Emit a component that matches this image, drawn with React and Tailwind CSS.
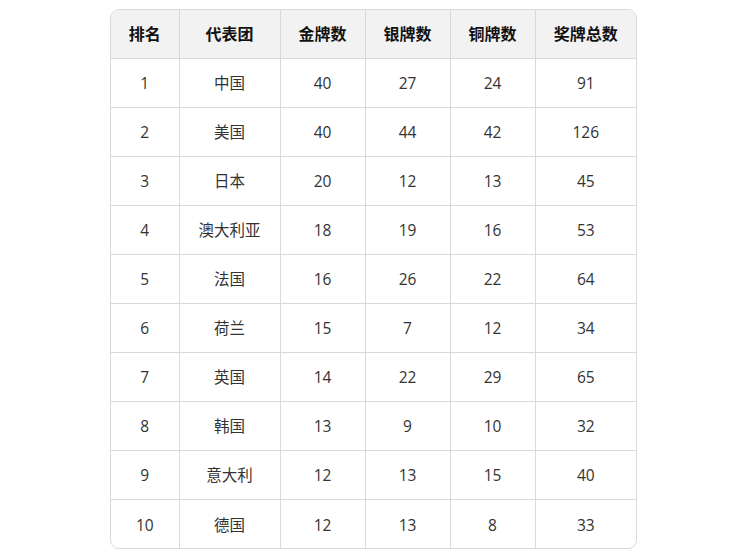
import React from 'react';

const headers = ['排名', '代表团', '金牌数', '银牌数', '铜牌数', '奖牌总数'];
const widths = ['w-[68px]', 'w-[101px]', 'w-[85px]', 'w-[85px]', 'w-[85px]', 'w-[101px]'];

const rows = [
  [1, '中国', 40, 27, 24, 91],
  [2, '美国', 40, 44, 42, 126],
  [3, '日本', 20, 12, 13, 45],
  [4, '澳大利亚', 18, 19, 16, 53],
  [5, '法国', 16, 26, 22, 64],
  [6, '荷兰', 15, 7, 12, 34],
  [7, '英国', 14, 22, 29, 65],
  [8, '韩国', 13, 9, 10, 32],
  [9, '意大利', 12, 13, 15, 40],
  [10, '德国', 12, 13, 8, 33],
];

export default function App() {
  return (
    <div className="min-h-[559px] bg-white pt-[9px] pl-[110px]" style={{ fontFamily: "'Open Sans', 'Noto Sans CJK SC', sans-serif" }}>
      <div className="w-[527px] border border-[#d9d9d9] rounded-[9px] overflow-hidden">
        <table className="w-[525px] border-collapse table-fixed">
          <colgroup>
            {widths.map((w, i) => <col key={i} className={w} />)}
          </colgroup>
          <thead>
            <tr className="bg-[#f2f2f2] h-[48px]">
              {headers.map((h, i) => (
                <th key={h} className={`text-[16px] font-bold text-[#111] text-center p-0 border-b border-[#d9d9d9] ${i < 5 ? 'border-r' : ''}`}>
                  {h}
                </th>
              ))}
            </tr>
          </thead>
          <tbody>
            {rows.map((r, ri) => (
              <tr key={r[0]} className="h-[49px]">
                {r.map((c, i) => (
                  <td key={i} className={`text-[15.5px] text-[#333] text-center p-0 pt-[3px] border-[#d9d9d9] ${i < 5 ? 'border-r' : ''} ${ri < rows.length - 1 ? 'border-b' : ''}`}>
                    {c}
                  </td>
                ))}
              </tr>
            ))}
          </tbody>
        </table>
      </div>
    </div>
  );
}
